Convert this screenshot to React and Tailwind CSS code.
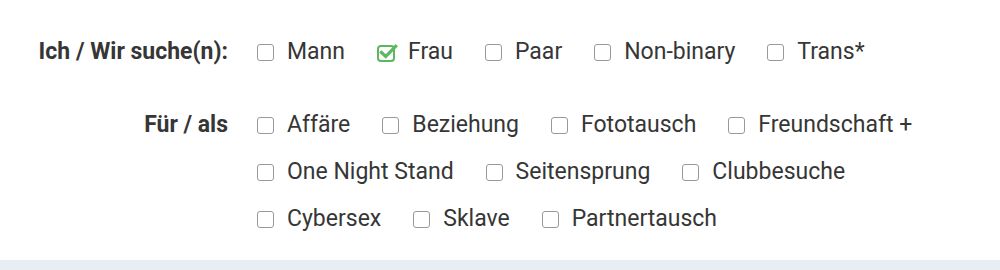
const seeking = [
  { label: 'Mann' },
  { label: 'Frau', checked: true },
  { label: 'Paar' },
  { label: 'Non-binary' },
  { label: 'Trans*' },
];

const purposes = [
  ['Affäre', 'Beziehung', 'Fototausch', 'Freundschaft +'],
  ['One Night Stand', 'Seitensprung', 'Clubbesuche'],
  ['Cybersex', 'Sklave', 'Partnertausch'],
];

const CheckedIcon = () => (
  <svg width="21" height="19" viewBox="0 0 21 19" fill="none">
    <rect x="1" y="3" width="16" height="15" rx="3" stroke="#5cb85c" strokeWidth="2" />
    <path d="M4.5 9.5 L8.7 13.5 L18.7 3.2" stroke="#5cb85c" strokeWidth="3.2" strokeLinecap="square" />
  </svg>
);

const Option = ({ label, checked }) => (
  <label className="flex items-center cursor-pointer">
    {checked ? (
      <span className="flex shrink-0 w-[21px] mr-[10px]">
        <CheckedIcon />
      </span>
    ) : (
      <span className="shrink-0 w-[17px] h-[17px] mr-[13px] border-[1.5px] border-[#999999] rounded-[3px] bg-white" />
    )}
    <span className="whitespace-nowrap">{label}</span>
  </label>
);

export default function App() {
  return (
    <div
      className="w-[1000px] h-[270px] bg-white flex flex-col text-[#363636] text-[23px]"
      style={{ fontFamily: 'Roboto, "Liberation Sans", sans-serif' }}
    >
      <div className="flex-1 pt-[29px]">
        <div className="flex">
          <div className="w-[228px] h-[47px] flex items-center justify-end font-bold">Ich / Wir suche(n):</div>
          <div className="ml-[29px] h-[47px] flex items-center gap-x-[32px]">
            {seeking.map((o) => (
              <Option key={o.label} label={o.label} checked={o.checked} />
            ))}
          </div>
        </div>
        <div className="flex mt-[26px]">
          <div className="w-[228px] h-[47px] flex items-center justify-end font-bold">Für / als</div>
          <div className="ml-[29px] flex flex-col">
            {purposes.map((row, i) => (
              <div key={i} className="h-[47px] flex items-center gap-x-[32px]">
                {row.map((p) => (
                  <Option key={p} label={p} />
                ))}
              </div>
            ))}
          </div>
        </div>
      </div>
      <div className="h-[10px] bg-[#e9eef3]" />
    </div>
  );
}
